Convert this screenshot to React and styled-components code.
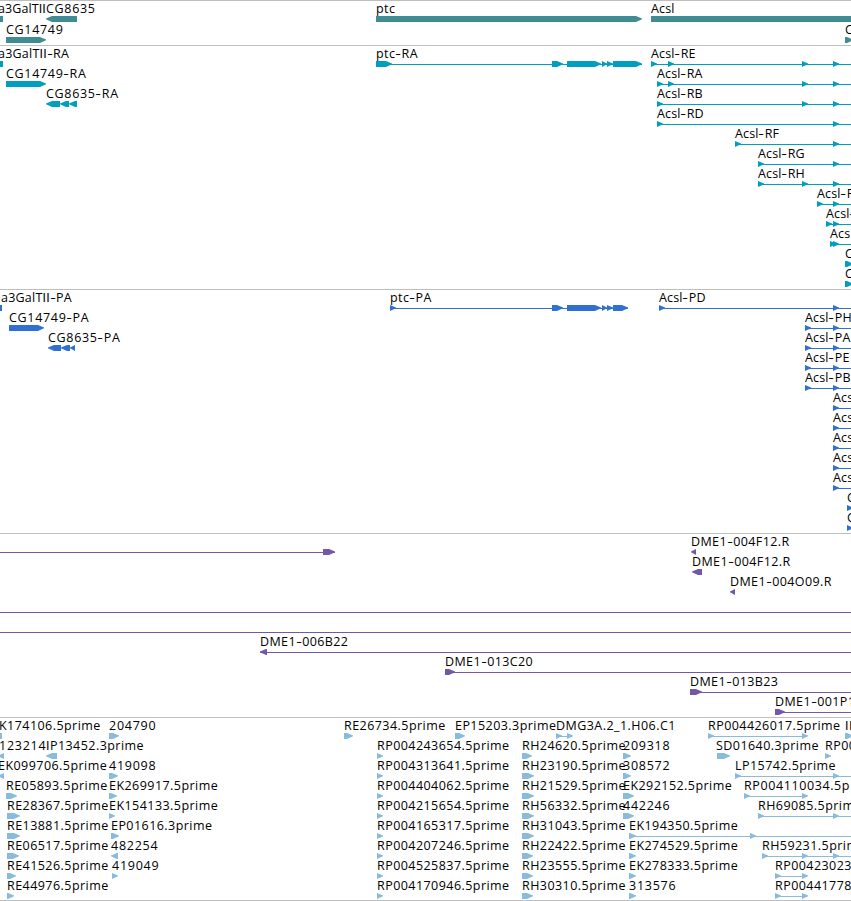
import React from 'react';
import styled, { createGlobalStyle } from 'styled-components';

const GlobalStyle = createGlobalStyle`
  body {
    margin: 0;
    background: #fff;
    overflow: hidden;
  }
`;

const Browser = styled.main`
  width: 851px;
  height: 901px;
  overflow: hidden;
  border-bottom: 1px solid #bebebe;
  box-sizing: border-box;
  background: #fff;
`;

const Track = styled.section`
  padding-bottom: ${props => props.$gap}px;
  border-top: 1px solid #bebebe;
  color: ${props => props.$color};
`;

const Row = styled.div`
  position: relative;
  height: ${props => props.$height}px;
`;

// features overlap freely along the genome axis
const Feature = styled.div`
  position: absolute;
  top: 0;
  display: flex;
  flex-direction: column;
`;

const Label = styled.span`
  height: 15px;
  line-height: 15px;
  color: #000;
  font-family: 'Open Sans', 'Noto Sans', sans-serif;
  font-size: 12.5px;
  letter-spacing: ${props => props.$spacing}px;
  white-space: pre;
`;

const Dash = styled.span`
  display: inline-block;
  margin: 0 1.5px 0 0.6px;
  letter-spacing: 0;
  transform: scaleX(1.4);
`;

// capital I without serifs
const PlainI = styled.span`
  font-family: 'Liberation Sans', Arial, sans-serif;
  line-height: 1;
`;

const Glyph = styled.svg`
  display: block;
  height: 6px;
  overflow: visible;
  fill: currentColor;
`;

const exonPath = (start, end, dir) => {
  const head = Math.min(6, end - start);
  if (dir === 'none') return `M${start} 0H${end}V6H${start}Z`;
  if (dir === 'left') return `M${end} 0V6H${start + head}L${start} 3.2V2.6L${start + head} 0Z`;
  return `M${start} 0H${end - head}L${end} 2.6V3.2L${end - head} 6H${start}Z`;
};

const labelSpacing = label => {
  if (label.startsWith('Acs')) return 0.15;
  if (label === 'a3GalTII') return 0.1;
  if (label.startsWith('a3')) return 0.22;
  if (label.startsWith('CG')) return 0.68;
  if (label.startsWith('DME')) return 0.4;
  if (/^\d+$/.test(label)) return 0.75;
  return 0.45;
};

// f(label, start, exons, options)
const f = (label, x, exons, options = {}) => ({ label, x, exons, ...options });

const genes = [
  [
    f('a3GalTII', -2, [[0, 3]], { dir: 'none' }),
    f('CG8635', 46, [[46, 77]], { dir: 'left' }),
    f('ptc', 376, [[376, 642]]),
    f('Acsl', 651, [[651, 860]]),
  ],
  [f('CG14749', 6, [[6, 46]]), f('C', 845, [[845, 853]])],
];

const transcripts = [
  [
    f('a3GalTII-RA', -2, [[0, 3]], { dir: 'none' }),
    f('ptc-RA', 376, [[376, 392], [552, 563], [567, 601], [602, 607], [607, 613], [613, 642]], { to: 642 }),
    f('Acsl-RE', 651, [[651, 657], [668, 674], [802, 808], [833, 839]], { to: 851 }),
  ],
  [
    f('CG14749-RA', 6, [[6, 46]]),
    f('Acsl-RA', 657, [[657, 663], [668, 674], [802, 808], [833, 839]], { to: 851 }),
  ],
  [
    f('CG8635-RA', 46, [[46, 60], [60, 69], [69, 77]], { dir: 'left' }),
    f('Acsl-RB', 657, [[657, 663], [802, 808], [833, 839]], { to: 851 }),
  ],
  [f('Acsl-RD', 657, [[657, 663], [833, 839]], { to: 851 })],
  [f('Acsl-RF', 735, [[735, 741], [833, 839]], { to: 851 })],
  [f('Acsl-RG', 758, [[758, 764], [833, 839]], { to: 851 })],
  [f('Acsl-RH', 758, [[758, 764], [802, 808], [833, 839]], { to: 851 })],
  [f('Acsl-R', 817, [[817, 823], [833, 839]], { to: 851 })],
  [f('Acsl-', 826, [[826, 832], [833, 839]], { to: 851 })],
  [f('Acs', 830, [[830, 836], [833, 839]], { to: 851 })],
  [f('C', 845, [[845, 853]])],
  [f('C', 845, [[845, 853]])],
];

const proteins = [
  [
    f('a3GalTII-PA', 1, [[0, 2]], { dir: 'none' }),
    f('ptc-PA', 390, [[390, 396], [552, 563], [567, 601], [602, 607], [607, 613], [613, 628]], { to: 628 }),
    f('Acsl-PD', 659, [[659, 665], [833, 839]], { to: 851 }),
  ],
  [f('CG14749-PA', 9, [[9, 44]]), f('Acsl-PH', 805, [[805, 811], [833, 839]], { to: 851 })],
  [
    f('CG8635-PA', 48, [[48, 61], [61, 70], [70, 75]], { dir: 'left' }),
    f('Acsl-PA', 805, [[805, 811], [833, 839]], { to: 851 }),
  ],
  [f('Acsl-PE', 805, [[805, 811], [833, 839]], { to: 851 })],
  [f('Acsl-PB', 805, [[805, 811], [833, 839]], { to: 851 })],
  [f('Acs', 833, [[833, 839]], { to: 851 })],
  [f('Acs', 833, [[833, 839]], { to: 851 })],
  [f('Acs', 833, [[833, 839]], { to: 851 })],
  [f('Acs', 833, [[833, 839]], { to: 851 })],
  [f('Acs', 833, [[833, 839]], { to: 851 })],
  [f('C', 847, [[847, 853]])],
  [f('C', 847, [[847, 853]])],
];

const clones = [
  [
    f('', 0, [[323, 335]], { to: 335 }),
    f('DME1-004F12.R', 691, [[691, 696]], { dir: 'left' }),
  ],
  [f('DME1-004F12.R', 692, [[692, 702]], { dir: 'left' })],
  [f('DME1-004O09.R', 730, [[730, 735]], { dir: 'left' })],
  [f('', 0, [], { to: 851 })],
  [f('', 0, [], { to: 851 })],
  [f('DME1-006B22', 260, [[260, 267]], { dir: 'left', to: 851 })],
  [f('DME1-013C20', 445, [[445, 455]], { to: 851 })],
  [f('DME1-013B23', 690, [[690, 702]], { to: 851 })],
  [f('DME1-001P1', 775, [[775, 785]], { to: 851 })],
];

const ests = [
  [
    f('K174106.5prime', -1, [[0, 2]], { dir: 'none' }),
    f('204790', 109, [[109, 119]]),
    f('RE26734.5prime', 344, [[344, 353]]),
    f('EP15203.3prime', 455, [[455, 465]]),
    f('DMG3A.2_1.H06.C1', 556, [[556, 562], [567, 573]], { to: 572 }),
    f('RP004426017.5prime', 708, [[708, 714], [802, 808]], { to: 807 }),
    f('IP', 845, [[845, 853]]),
  ],
  [
    f('123214', -1, [[-2, 4]], { dir: 'left' }),
    f('IP13452.3prime', 46, [[46, 57]], { dir: 'left' }),
    f('RP004243654.5prime', 377, [[377, 383]]),
    f('RH24620.5prime', 522, [[522, 532]]),
    f('209318', 623, [[623, 631]]),
    f('SD01640.3prime', 716, [[717, 730]]),
    f('RP00', 825, [[825, 831]]),
  ],
  [
    f('EK099706.5prime', -2, [[-2, 4]], { dir: 'left' }),
    f('419098', 109, [[109, 118]]),
    f('RP004313641.5prime', 377, [[377, 383]]),
    f('RH23190.5prime', 522, [[522, 534]]),
    f('308572', 623, [[623, 631]]),
    f('LP15742.5prime', 735, [[735, 741], [833, 839]], { to: 851 }),
  ],
  [
    f('RE05893.5prime', 6, [[6, 17]]),
    f('EK269917.5prime', 109, [[109, 117]]),
    f('RP004404062.5prime', 377, [[377, 383]]),
    f('RH21529.5prime', 522, [[522, 534]]),
    f('EK292152.5prime', 623, [[623, 634]]),
    f('RP004110034.5p', 744, [[744, 750], [802, 808]], { to: 807, spacing: 0.6 }),
  ],
  [
    f('RE28367.5prime', 7, [[7, 20]]),
    f('EK154133.5prime', 109, [[109, 115]]),
    f('RP004215654.5prime', 377, [[377, 383]]),
    f('RH56332.5prime', 522, [[522, 534]]),
    f('442246', 623, [[623, 634]]),
    f('RH69085.5prim', 758, [[758, 764], [833, 839]], { to: 851 }),
  ],
  [
    f('RE13881.5prime', 7, [[7, 20]]),
    f('EP01616.3prime', 111, [[111, 119]]),
    f('RP004165317.5prime', 377, [[377, 383]]),
    f('RH31043.5prime', 522, [[522, 534]]),
    f('EK194350.5prime', 629, [[629, 636], [750, 756]], { to: 851 }),
  ],
  [
    f('RE06517.5prime', 7, [[7, 19]]),
    f('482254', 111, [[111, 118]], { dir: 'left' }),
    f('RP004207246.5prime', 377, [[377, 383]]),
    f('RH22422.5prime', 522, [[522, 533]]),
    f('EK274529.5prime', 629, [[629, 636]]),
    f('RH59231.5prim', 762, [[762, 768], [802, 808], [833, 839]], { to: 851 }),
  ],
  [
    f('RE41526.5prime', 7, [[7, 16]]),
    f('419049', 112, [[112, 118]]),
    f('RP004525837.5prime', 377, [[377, 383]]),
    f('RH23555.5prime', 522, [[522, 533]]),
    f('EK278333.5prime', 629, [[629, 636]]),
    f('RP00423023', 775, [[775, 781], [802, 808]], { to: 807 }),
  ],
  [
    f('RE44976.5prime', 7, [[7, 14]]),
    f('RP004170946.5prime', 377, [[377, 383]]),
    f('RH30310.5prime', 522, [[522, 533]]),
    f('313576', 629, [[629, 636]]),
    f('RP00441778', 775, [[775, 781], [802, 808]], { to: 807 }),
  ],
];

const tracks = [
  { name: 'genes', color: '#408c94', height: 21, gap: 2, rows: genes },
  { name: 'transcripts', color: '#009fc0', height: 20, gap: 3, rows: transcripts },
  { name: 'proteins', color: '#3070d0', height: 20, gap: 3, rows: proteins },
  { name: 'clones', color: '#7458a6', height: 20, gap: 3, rows: clones },
  { name: 'ests', color: '#88bbdd', height: 20, gap: 2, rows: ests },
];

const renderPart = (part, i) => {
  if (part === '-') return <Dash key={i}>-</Dash>;
  if (part === 'I') return <PlainI key={i}>I</PlainI>;
  return part;
};

const FeatureItem = ({ label, x, exons, dir = 'right', to, spacing }) => (
  <Feature style={{ left: x }}>
    <Label $spacing={spacing || labelSpacing(label)}>
      {label.split(/([-I])/).map(renderPart)}
    </Label>
    <Glyph width="1" viewBox="0 0 1 6">
      {to && <rect x="0" y="3" width={to - x} height="1" />}
      {exons.map(([start, end]) => (
        <path key={start} d={exonPath(start - x, end - x, dir)} />
      ))}
    </Glyph>
  </Feature>
);

const App = () => (
  <Browser>
    <GlobalStyle />
    {tracks.map(track => (
      <Track key={track.name} $color={track.color} $gap={track.gap}>
        {track.rows.map((row, i) => (
          <Row key={i} $height={track.height}>
            {row.map(item => (
              <FeatureItem key={item.x} {...item} />
            ))}
          </Row>
        ))}
      </Track>
    ))}
  </Browser>
);

export default App;
